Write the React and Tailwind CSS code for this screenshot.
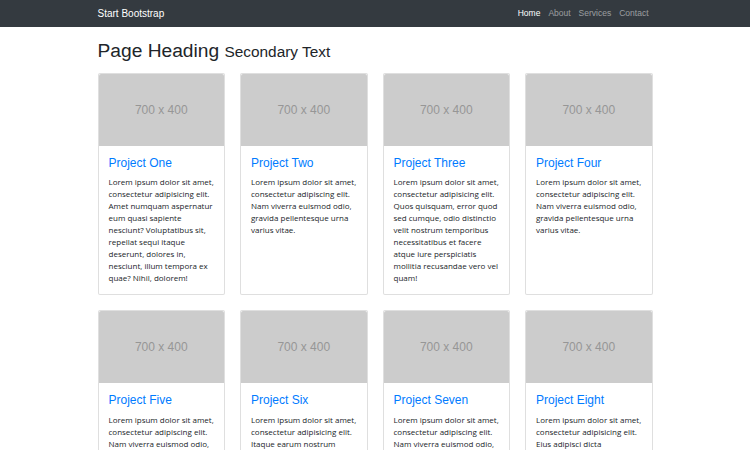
import React from 'react';

const projects = [
  { title: 'Project One', text: 'Lorem ipsum dolor sit amet, consectetur adipisicing elit. Amet numquam aspernatur eum quasi sapiente nesciunt? Voluptatibus sit, repellat sequi itaque deserunt, dolores in, nesciunt, illum tempora ex quae? Nihil, dolorem!' },
  { title: 'Project Two', text: 'Lorem ipsum dolor sit amet, consectetur adipiscing elit. Nam viverra euismod odio, gravida pellentesque urna varius vitae.' },
  { title: 'Project Three', text: 'Lorem ipsum dolor sit amet, consectetur adipisicing elit. Quos quisquam, error quod sed cumque, odio distinctio velit nostrum temporibus necessitatibus et facere atque iure perspiciatis mollitia recusandae vero vel quam!' },
  { title: 'Project Four', text: 'Lorem ipsum dolor sit amet, consectetur adipiscing elit. Nam viverra euismod odio, gravida pellentesque urna varius vitae.' },
  { title: 'Project Five', text: 'Lorem ipsum dolor sit amet, consectetur adipiscing elit. Nam viverra euismod odio, gravida pellentesque urna varius vitae.' },
  { title: 'Project Six', text: 'Lorem ipsum dolor sit amet, consectetur adipisicing elit. Itaque earum nostrum suscipit ducimus nihil provident, perferendis rem illo, voluptate atque, sit eius in voluptates, nemo repellat fugiat excepturi! Nemo, esse.' },
  { title: 'Project Seven', text: 'Lorem ipsum dolor sit amet, consectetur adipiscing elit. Nam viverra euismod odio, gravida pellentesque urna varius vitae.' },
  { title: 'Project Eight', text: 'Lorem ipsum dolor sit amet, consectetur adipisicing elit. Eius adipisci dicta dignissimos neque animi ea, veritatis, provident hic consequatur ut esse! Commodi ea consequatur accusantium, beatae qui deserunt tenetur ipsa.' },
];

function ProjectCard({ title, text }) {
  return (
    <div className="flex flex-col rounded-[2px] border border-black/[0.125] bg-white">
      <div className="flex h-[72px] items-center justify-center rounded-t-[2px] bg-[#cccccc]">
        <span className="text-[12px] font-light text-[#969696]">700 x 400</span>
      </div>
      <div className="p-[10px]">
        <h4 className="mb-[6px] text-[12px] leading-[14.4px] text-[#007bff]">{title}</h4>
        <p className="font-['Open_Sans',Arial,sans-serif] text-[8px] font-medium leading-[12px] text-[#212529]">{text}</p>
      </div>
    </div>
  );
}

export default function App() {
  return (
    <div className="min-h-[450px] bg-white font-['Liberation_Sans',Arial,sans-serif]">
      {/* Navbar */}
      <nav className="h-[27px] bg-[#343a40]">
        <div className="mx-auto flex h-full w-[555px] items-center justify-between">
          <span className="text-[10px] text-white">Start Bootstrap</span>
          <div className="flex items-center gap-[8px] pr-[4px] text-[8.5px]">
            <span className="text-white">Home</span>
            <span className="text-white/50">About</span>
            <span className="text-white/50">Services</span>
            <span className="text-white/50">Contact</span>
          </div>
        </div>
      </nav>

      <div className="mx-auto w-[555px]">
        {/* Heading */}
        <h1 className="mt-[12px] mb-[9px] text-[19.2px] leading-[24px] text-[#212529]">
          Page Heading <small className="text-[15.4px]">Secondary Text</small>
        </h1>

        {/* Cards */}
        <div className="grid grid-cols-4 gap-x-[15px] gap-y-[15px]">
          {projects.map((p) => (
            <ProjectCard key={p.title} {...p} />
          ))}
        </div>
      </div>
    </div>
  );
}
